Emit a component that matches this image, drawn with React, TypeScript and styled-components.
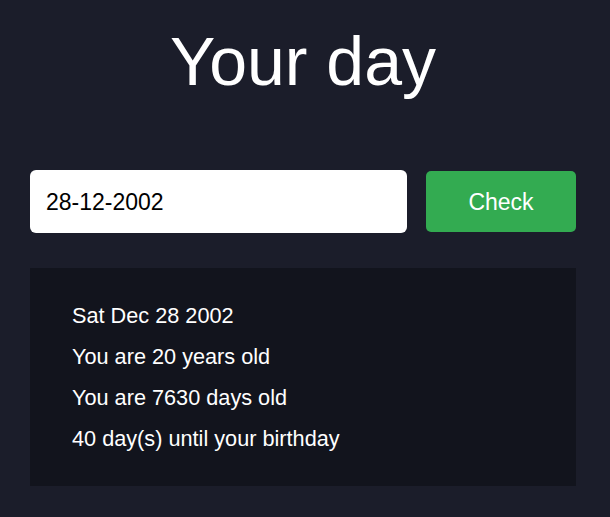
import React, { useState } from "react";
import styled, { createGlobalStyle } from "styled-components";

const GlobalStyle = createGlobalStyle`
  html, body {
    margin: 0;
    padding: 0;
    background: #1b1d2a;
    font-family: "Liberation Sans", Arial, sans-serif;
  }
  * { box-sizing: border-box; }
`;

const Page = styled.main`
  padding: 22px 34px 0 30px;
  display: flex;
  flex-direction: column;
`;

const Title = styled.h1`
  margin: 0 0 70px;
  font-size: 68px;
  line-height: 78px;
  font-weight: 400;
  color: #ffffff;
  text-align: center;
`;

const Form = styled.form`
  display: flex;
  align-items: center;
  gap: 19px;
  margin-bottom: 35px;
`;

const DateInput = styled.input`
  flex: 1;
  height: 63px;
  border: none;
  border-radius: 6px;
  background: #ffffff;
  color: #000000;
  padding: 2px 16px 0;
  font-family: "Liberation Sans", Arial, sans-serif;
  font-size: 23px;
  outline: none;
`;

const CheckButton = styled.button`
  width: 150px;
  height: 61px;
  border: none;
  border-radius: 5px;
  background: #33ab51;
  color: #ffffff;
  padding: 2px 0 0;
  font-family: "Liberation Sans", Arial, sans-serif;
  font-size: 23px;
  cursor: pointer;
`;

const Results = styled.ul`
  margin: 0;
  list-style: none;
  background: #12141d;
  padding: 27px 42px 27px;
`;

const ResultLine = styled.li`
  color: #ffffff;
  font-size: 21.7px;
  line-height: 41px;
`;

export default function App() {
  const [value, setValue] = useState("28-12-2002");
  const lines = [
    "Sat Dec 28 2002",
    "You are 20 years old",
    "You are 7630 days old",
    "40 day(s) until your birthday",
  ];
  return (
    <>
      <GlobalStyle />
      <Page>
        <Title>Your day</Title>
        <Form onSubmit={(e) => e.preventDefault()}>
          <DateInput value={value} onChange={(e) => setValue(e.target.value)} />
          <CheckButton type="submit">Check</CheckButton>
        </Form>
        <Results>
          {lines.map((l) => (
            <ResultLine key={l}>{l}</ResultLine>
          ))}
        </Results>
      </Page>
    </>
  );
}
